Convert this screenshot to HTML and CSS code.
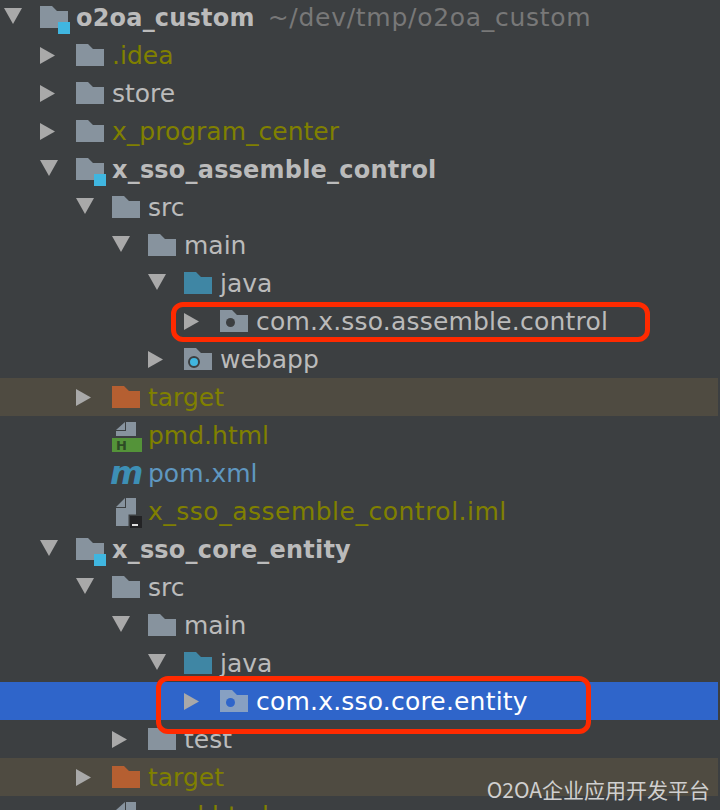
FILE: index.html
```html
<!DOCTYPE html>
<html lang="en">
<head>
    <meta charset="UTF-8">
    <meta name="viewport" content="width=device-width, initial-scale=1.0">
    <title>Project tree</title>
    <link rel="stylesheet" href="styles.css">
</head>
<body>
    <svg class="icon-defs" width="0" height="0">
        <symbol id="arrow-right" viewBox="0 0 15 17"><path d="M0 0 L15 8.5 L0 17 Z"/></symbol>
        <symbol id="arrow-down" viewBox="0 0 18 16"><path d="M0 0 H18 L9 16 Z"/></symbol>
        <symbol id="folder" viewBox="0 0 28 22"><path d="M0 0 H12 L17 5 H28 V22 H0 Z"/></symbol>
        <symbol id="page-short" viewBox="0 0 20 14"><path d="M0 8 L9 0 V8 Z M10 0 H20 V14 H0 V9 H10 Z"/></symbol>
        <symbol id="page-tall" viewBox="0 0 20 28"><path d="M0 9 L9 0 V9 Z M10 0 H20 V16.5 H12.5 V28 H0 V10 H10 Z"/></symbol>
    </svg>

    <div class="tree">
        <div class="row lvl-0">
            <svg class="arrow down"><use href="#arrow-down"/></svg>
            <span class="icon"><svg class="folder"><use href="#folder"/></svg><i class="module-mark"></i></span>
            <span class="label bold">o2oa_custom</span><span class="label path">~/dev/tmp/o2oa_custom</span>
        </div>
        <div class="row lvl-1">
            <svg class="arrow right"><use href="#arrow-right"/></svg>
            <span class="icon"><svg class="folder"><use href="#folder"/></svg></span>
            <span class="label olive">.idea</span>
        </div>
        <div class="row lvl-1">
            <svg class="arrow right"><use href="#arrow-right"/></svg>
            <span class="icon"><svg class="folder"><use href="#folder"/></svg></span>
            <span class="label">store</span>
        </div>
        <div class="row lvl-1">
            <svg class="arrow right"><use href="#arrow-right"/></svg>
            <span class="icon"><svg class="folder"><use href="#folder"/></svg></span>
            <span class="label olive">x_program_center</span>
        </div>
        <div class="row lvl-1">
            <svg class="arrow down"><use href="#arrow-down"/></svg>
            <span class="icon"><svg class="folder"><use href="#folder"/></svg><i class="module-mark"></i></span>
            <span class="label bold">x_sso_assemble_control</span>
        </div>
        <div class="row lvl-2">
            <svg class="arrow down"><use href="#arrow-down"/></svg>
            <span class="icon"><svg class="folder"><use href="#folder"/></svg></span>
            <span class="label">src</span>
        </div>
        <div class="row lvl-3">
            <svg class="arrow down"><use href="#arrow-down"/></svg>
            <span class="icon"><svg class="folder"><use href="#folder"/></svg></span>
            <span class="label">main</span>
        </div>
        <div class="row lvl-4">
            <svg class="arrow down"><use href="#arrow-down"/></svg>
            <span class="icon"><svg class="folder source"><use href="#folder"/></svg></span>
            <span class="label">java</span>
        </div>
        <div class="row lvl-5">
            <svg class="arrow right"><use href="#arrow-right"/></svg>
            <span class="icon"><svg class="folder"><use href="#folder"/></svg><i class="package-dot"></i></span>
            <span class="label package">com.x.sso.assemble.control</span>
        </div>
        <div class="row lvl-4">
            <svg class="arrow right"><use href="#arrow-right"/></svg>
            <span class="icon"><svg class="folder"><use href="#folder"/></svg><i class="web-dot"></i></span>
            <span class="label">webapp</span>
        </div>
        <div class="row lvl-2 excluded">
            <svg class="arrow right"><use href="#arrow-right"/></svg>
            <span class="icon"><svg class="folder target"><use href="#folder"/></svg></span>
            <span class="label olive">target</span>
        </div>
        <div class="row lvl-3">
            <span class="icon">
                <svg class="page"><use href="#page-short"/></svg>
                <span class="html-badge">H</span>
            </span>
            <span class="label olive">pmd.html</span>
        </div>
        <div class="row lvl-3">
            <span class="icon"><span class="maven">m</span></span>
            <span class="label blue">pom.xml</span>
        </div>
        <div class="row lvl-3">
            <span class="icon">
                <svg class="page tall"><use href="#page-tall"/></svg>
                <span class="iml-badge"></span>
            </span>
            <span class="label olive wide">x_sso_assemble_control.iml</span>
        </div>
        <div class="row lvl-1">
            <svg class="arrow down"><use href="#arrow-down"/></svg>
            <span class="icon"><svg class="folder"><use href="#folder"/></svg><i class="module-mark"></i></span>
            <span class="label bold">x_sso_core_entity</span>
        </div>
        <div class="row lvl-2">
            <svg class="arrow down"><use href="#arrow-down"/></svg>
            <span class="icon"><svg class="folder"><use href="#folder"/></svg></span>
            <span class="label">src</span>
        </div>
        <div class="row lvl-3">
            <svg class="arrow down"><use href="#arrow-down"/></svg>
            <span class="icon"><svg class="folder"><use href="#folder"/></svg></span>
            <span class="label">main</span>
        </div>
        <div class="row lvl-4">
            <svg class="arrow down"><use href="#arrow-down"/></svg>
            <span class="icon"><svg class="folder source"><use href="#folder"/></svg></span>
            <span class="label">java</span>
        </div>
        <div class="row lvl-5 selected">
            <svg class="arrow right"><use href="#arrow-right"/></svg>
            <span class="icon"><svg class="folder"><use href="#folder"/></svg><i class="package-dot"></i></span>
            <span class="label package">com.x.sso.core.entity</span>
        </div>
        <div class="row lvl-3">
            <svg class="arrow right"><use href="#arrow-right"/></svg>
            <span class="icon"><svg class="folder"><use href="#folder"/></svg></span>
            <span class="label">test</span>
        </div>
        <div class="row lvl-2 excluded">
            <svg class="arrow right"><use href="#arrow-right"/></svg>
            <span class="icon"><svg class="folder target"><use href="#folder"/></svg></span>
            <span class="label olive">target</span>
        </div>
        <div class="row lvl-3">
            <span class="icon">
                <svg class="page"><use href="#page-short"/></svg>
                <span class="html-badge">H</span>
            </span>
            <span class="label olive">pmd.html</span>
        </div>
    </div>

    <!-- red marks drawn over the screenshot -->
    <div class="mark mark-control"></div>
    <div class="mark mark-entity"></div>
    <div class="watermark">O2OA企业应用开发平台</div>
</body>
</html>
```

FILE: styles.css
```css
body {
    margin: 0;
    height: 810px;
    position: relative;
    overflow: hidden;
    background-color: #3c3f41;
    font-family: "DejaVu Sans", sans-serif;
    font-size: 25px;
    color: #bbbbbb;
}

.icon-defs {
    position: absolute;
}

.tree {
    margin-top: -2px;
    width: 718px;
}

.row {
    display: flex;
    align-items: center;
    height: 38px;
    white-space: nowrap;
}

/* each tree level moves 36px */
.lvl-0 { padding-left: 4px; }
.lvl-1 { padding-left: 40px; }
.lvl-2 { padding-left: 76px; }
.lvl-3 { padding-left: 112px; }
.lvl-4 { padding-left: 148px; }
.lvl-5 { padding-left: 184px; }

.excluded {
    background-color: #4f4b41;
}

.selected {
    background-color: #2f65ca;
}

.selected .label {
    color: #ffffff;
}

.arrow {
    flex: none;
    fill: #a9a9a9;
}

.arrow.right {
    width: 15px;
    height: 17px;
    margin-right: 21px;
}

.arrow.down {
    width: 18px;
    height: 16px;
    margin-top: -2px;
    margin-right: 18px;
}

.icon {
    position: relative;
    flex: none;
    width: 36px;
    height: 38px;
}

.folder {
    position: absolute;
    left: 0;
    top: 8px;
    width: 28px;
    height: 22px;
    fill: #87939e;
}

.folder.source {
    fill: #3f86a4;
}

.folder.target {
    fill: #b55f31;
}

.selected .folder {
    fill: #87a0c2;
}

.module-mark {
    position: absolute;
    left: 18px;
    top: 24px;
    width: 12px;
    height: 12px;
    background-color: #40b6e0;
}

.package-dot {
    position: absolute;
    left: 6px;
    top: 16px;
    width: 9px;
    height: 9px;
    border-radius: 50%;
    background-color: #3c3f41;
}

.selected .package-dot {
    background-color: #2f65ca;
}

.web-dot {
    position: absolute;
    left: 4px;
    top: 16px;
    width: 8px;
    height: 8px;
    border: 2px solid #3c3f41;
    border-radius: 50%;
    background-color: #40b6e0;
}

.page {
    position: absolute;
    left: 4px;
    top: 6px;
    width: 20px;
    height: 14px;
    fill: #87939e;
}

.page.tall {
    height: 28px;
}

.html-badge {
    position: absolute;
    left: 0;
    top: 22px;
    width: 30px;
    height: 14px;
    padding-left: 4px;
    box-sizing: border-box;
    background-color: #549339;
    color: #2d4a25;
    font-size: 13px;
    font-weight: bold;
    line-height: 15px;
}

.iml-badge {
    position: absolute;
    left: 18px;
    top: 24px;
    width: 12px;
    height: 12px;
    background-color: #232325;
}

.iml-badge::after {
    content: "";
    position: absolute;
    left: 2px;
    bottom: 2px;
    width: 6px;
    height: 2px;
    background-color: #e0e0e0;
}

.maven {
    position: absolute;
    left: -2px;
    top: 6px;
    font-size: 32px;
    font-weight: bold;
    font-style: italic;
    line-height: 26px;
    color: #3d8fb5;
}

.bold {
    padding-top: 2px;
    font-size: 24px;
    font-weight: bold;
    letter-spacing: 0.2px;
}

.package {
    letter-spacing: 0.2px;
}

.olive {
    color: #808000;
}

.blue {
    color: #5f97c0;
}

.wide {
    letter-spacing: 0.5px;
}

.path {
    margin-left: 13px;
    letter-spacing: 0.72px;
    color: #787878;
}

.mark {
    position: absolute;
    border: 5px solid #ff2a00;
    border-radius: 12px;
    box-sizing: border-box;
}

.mark-control {
    left: 171px;
    top: 302px;
    width: 479px;
    height: 40px;
}

.mark-entity {
    left: 156px;
    top: 676px;
    width: 435px;
    height: 58px;
}

.watermark {
    position: absolute;
    right: 10px;
    top: 775px;
    font-family: "Noto Sans CJK SC", sans-serif;
    font-size: 21px;
    line-height: 28px;
    color: #d0d0d0;
}
```
